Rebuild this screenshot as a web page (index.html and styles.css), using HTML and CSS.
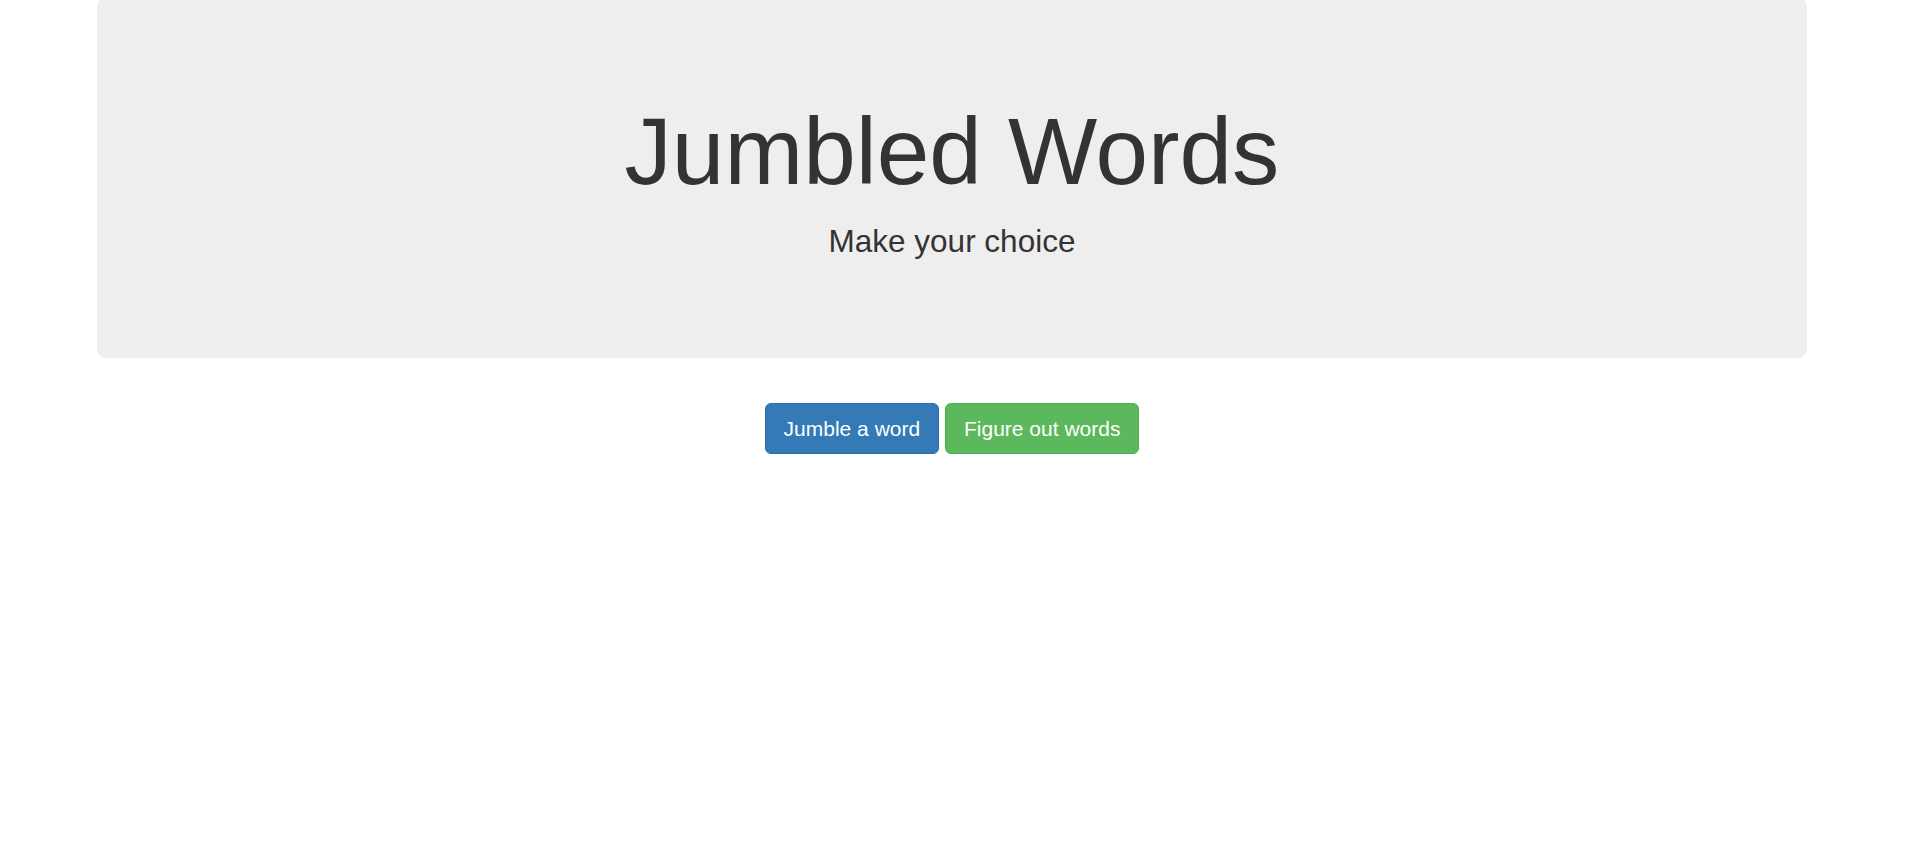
FILE: index.html
```html
<!DOCTYPE html>
<html lang="en">
<head>
<meta charset="utf-8">
<title>Jumbled Words</title>
<link rel="stylesheet" href="styles.css">
</head>
<body>
<div class="container">
  <div class="jumbotron">
    <h1>Jumbled Words</h1>
    <p>Make your choice</p>
  </div>
  <div class="actions">
    <button class="btn btn-primary">Jumble a word</button>
    <button class="btn btn-success">Figure out words</button>
  </div>
</div>
</body>
</html>
```

FILE: styles.css
```css
html, body {
  margin: 0;
  padding: 0;
  background: #fff;
}
body {
  font-family: "Liberation Sans", Arial, Helvetica, sans-serif;
  font-size: 21px;
  line-height: 1.42857;
  color: #333;
  padding-right: 7px;
  overflow: hidden;
}
.container {
  width: 1755px;
  margin: 0 auto;
  padding: 0 22.5px;
  box-sizing: border-box;
}
.jumbotron {
  margin-top: -2px;
  margin-bottom: 45px;
  padding: 72px 90px;
  background: #eee;
  border-radius: 9px;
  text-align: center;
  color: #333;
}
.jumbotron h1 {
  margin: 30px 0 15px;
  font-size: 94.5px;
  line-height: 1.1;
  font-weight: 500;
}
.jumbotron p {
  margin: 0 0 22.5px;
  font-size: 31.5px;
  line-height: 45px;
  font-weight: 200;
}
.actions {
  text-align: center;
}
.btn {
  display: inline-block;
  margin: 0;
  padding: 9.5px 18px;
  font-family: inherit;
  font-size: 21px;
  line-height: 30px;
  color: #fff;
  border: 1px solid transparent;
  border-radius: 6px;
  cursor: pointer;
  vertical-align: middle;
}
.btn-primary {
  background: #337ab7;
  border-color: #2e6da4;
}
.btn-success {
  background: #5cb85c;
  border-color: #4cae4c;
}
```
